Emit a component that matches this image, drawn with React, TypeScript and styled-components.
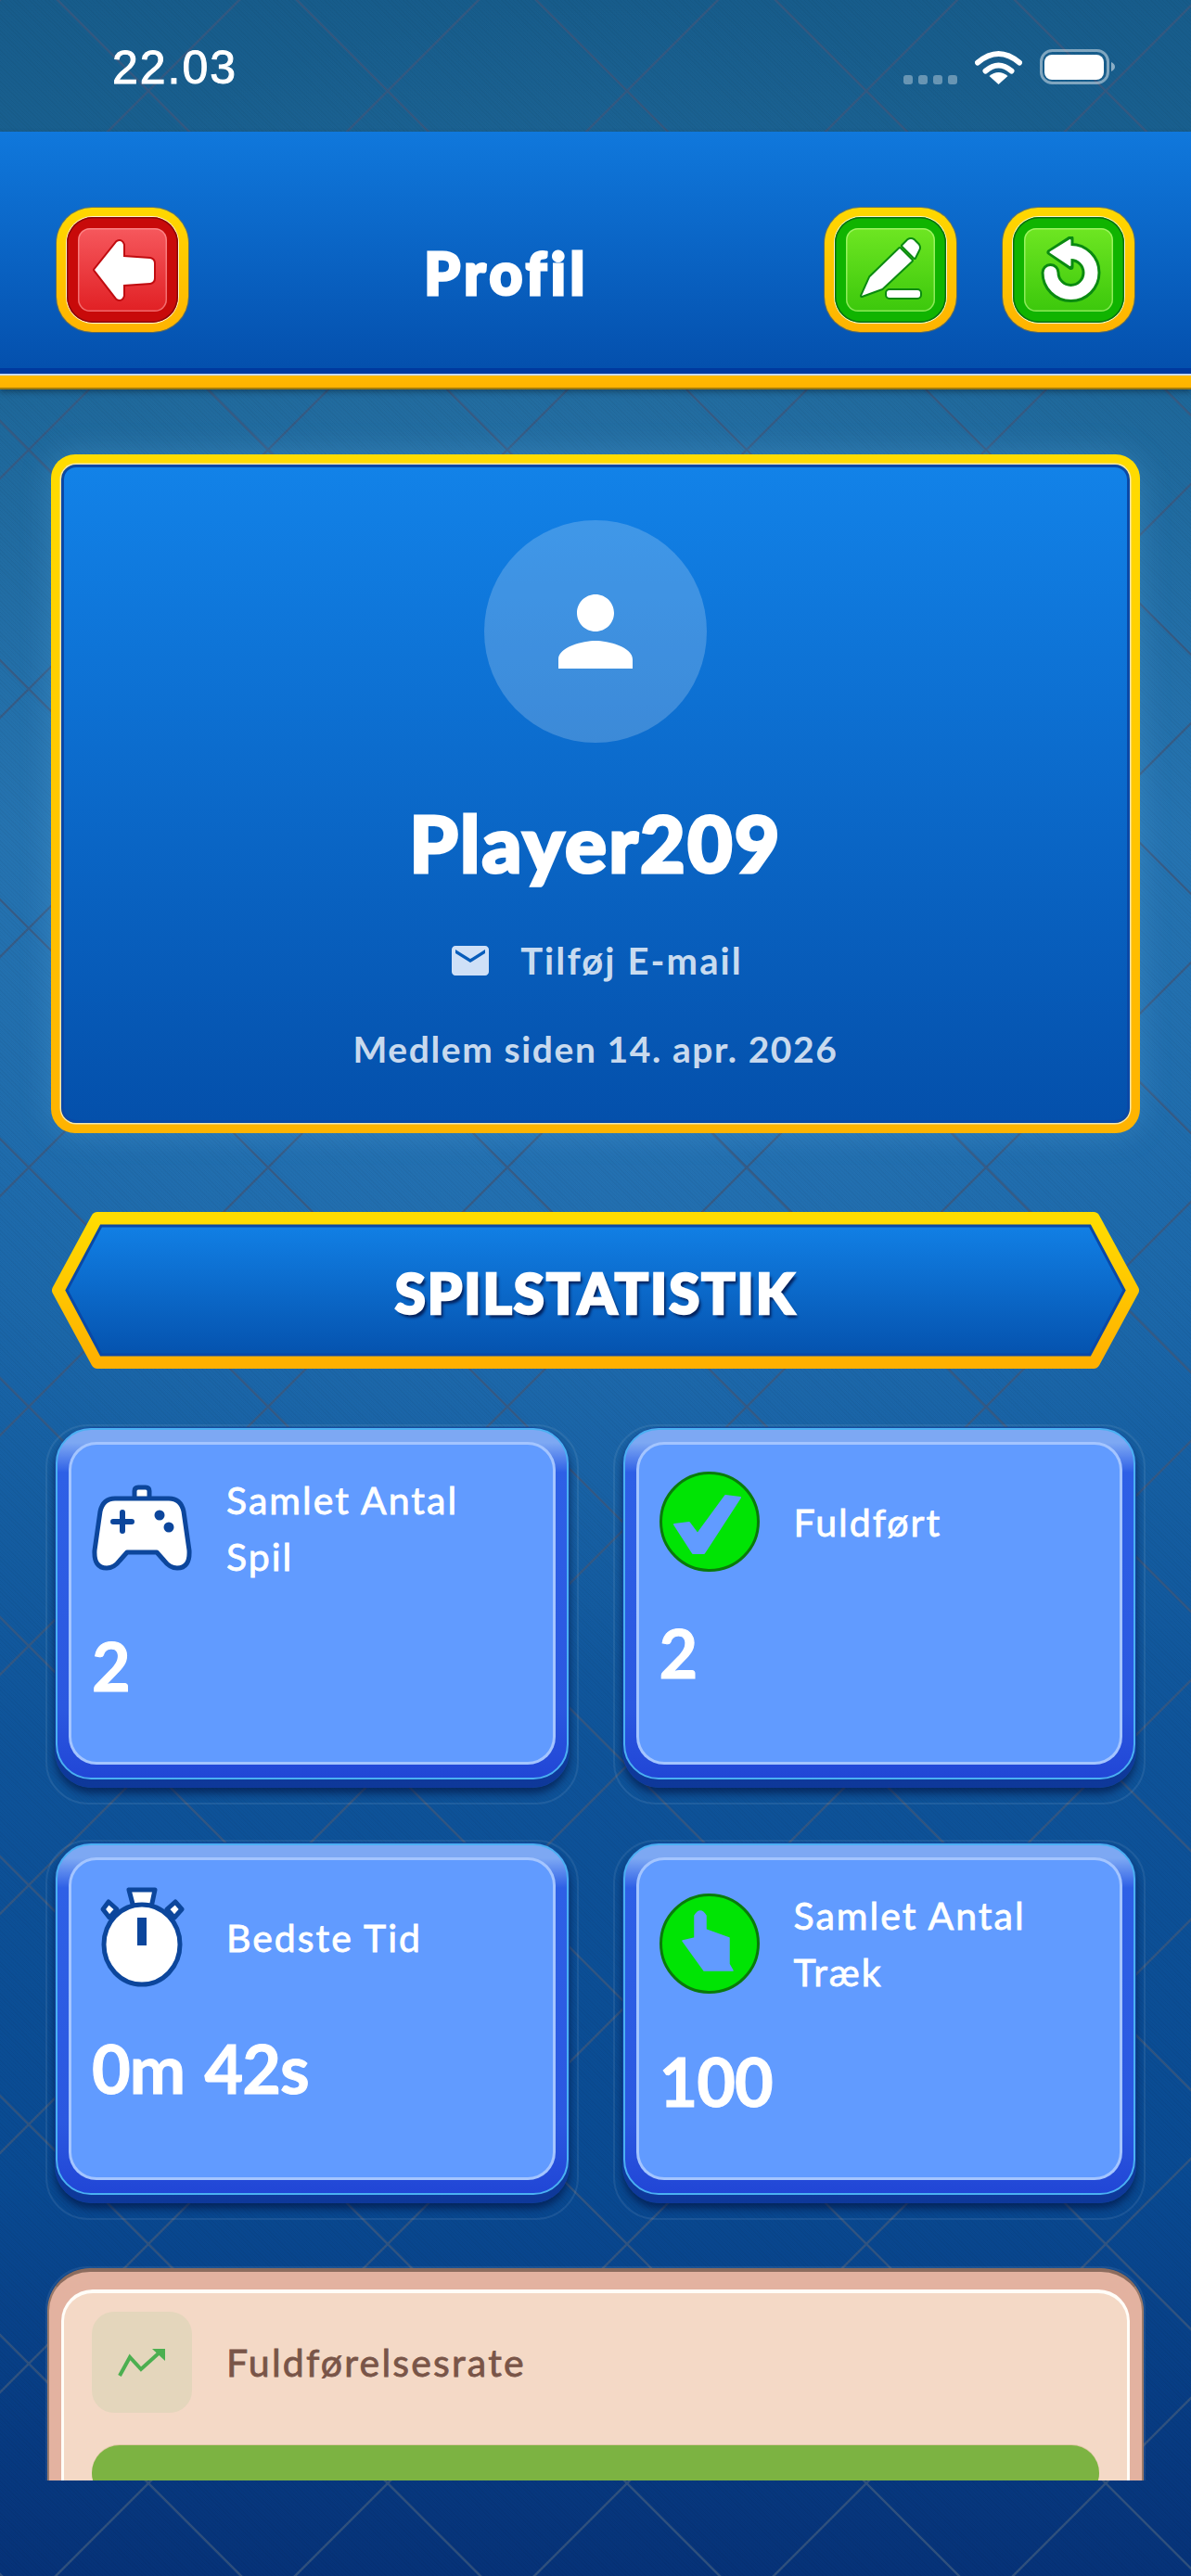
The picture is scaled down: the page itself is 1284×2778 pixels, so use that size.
import React from "react";
import styled, { createGlobalStyle } from "styled-components";

const tile = encodeURIComponent(
  `<svg xmlns="http://www.w3.org/2000/svg" width="258" height="258"><path d="M0 0L258 258M258 0L0 258" stroke="rgb(58,88,126)" stroke-opacity="0.8" stroke-width="2.4" fill="none"/></svg>`
);

const Global = createGlobalStyle`
  html, body { margin: 0; padding: 0; background: #0a4a90; }
  body { overflow: hidden; }
  * { box-sizing: border-box; }
`;

const Page = styled.div`
  width: 1284px;
  height: 2778px;
  display: flex;
  flex-direction: column;
  overflow: hidden;
  padding-bottom: 103px;
  font-family: Lato, "Noto Sans", sans-serif;
  color: #fff;
  background-color: #0a4a90;
  background-image:
    repeating-linear-gradient(45deg, rgba(0, 0, 0, 0.035) 0 1px, transparent 1px 3px),
    url("data:image/svg+xml,${tile}"),
    radial-gradient(ellipse 900px 900px at 50% 900px, rgba(70, 150, 215, 0.28), transparent 100%),
    linear-gradient(180deg, #175c8b 0, #1c6596 400px, #2270ad 900px, #1a66a8 1400px, #0e5399 1900px, #094a92 2350px, #063278 2778px);
  background-position: 0 0, 160px 98px, 0 0, 0 0;
  background-size: auto, 258px 258px, auto, auto;
`;

const StatusBar = styled.div`
  height: 142px;
  flex: none;
  display: flex;
  justify-content: space-between;
  align-items: flex-start;
  padding: 0 81px 0 121px;
`;

const Clock = styled.div`
  font-family: "Liberation Sans", sans-serif;
  font-size: 50px;
  line-height: 50px;
  margin-top: 48px;
  letter-spacing: 2px;
  -webkit-text-stroke: 1px #fff;
`;

const StatusIcons = styled.div`
  display: flex;
  align-items: flex-end;
  margin-top: 53px;
`;

const SignalDots = styled.div`
  display: flex;
  gap: 6px;
  margin-right: 19px;
`;

const SignalDot = styled.span`
  width: 10px;
  height: 10px;
  border-radius: 3px;
  background: rgba(255, 255, 255, 0.35);
`;

const Header = styled.header`
  height: 278px;
  flex: none;
  padding: 82px 61px 0;
  display: flex;
  justify-content: space-between;
  align-items: flex-start;
  background:
    linear-gradient(180deg, #1078dc 0, #0450ad 255px, #00399e 255px, #00399e 261px, #c7d9ef 261px, #c7d9ef 263px, #ffb900 263px, #ffb300 276px, #a07c10 276px);
  box-shadow: 0 3px 6px rgba(0, 0, 0, 0.3);
`;

const Title = styled.h1`
  margin: 0;
  padding-top: 30px;
  font-size: 62px;
  line-height: 80px;
  font-weight: 900;
  letter-spacing: 4.5px;
  -webkit-text-stroke: 3px #fff;
`;

const ButtonGroup = styled.div`
  display: flex;
  gap: 50px;
`;

const GameButton = styled.div`
  width: 142px;
  height: 134px;
  padding: 10px 11px;
  border-radius: 38px;
  background: linear-gradient(180deg, #ffd800, #ffb300);
  box-shadow: 0 0 0 1px rgba(170, 120, 20, 0.55);
`;

const ButtonFace = styled.div<{ $tone: "red" | "green" }>`
  height: 100%;
  padding: 12px;
  border-radius: 28px;
  background: ${(p) => (p.$tone === "red" ? "#c80a0a" : "#10b400")};
  box-shadow:
    0 0 0 1px #fff6d0,
    inset 0 0 0 1.5px ${(p) => (p.$tone === "red" ? "#8a0808" : "#0a7010")};
`;

const ButtonGloss = styled.div<{ $tone: "red" | "green" }>`
  height: 100%;
  border-radius: 13px;
  display: flex;
  align-items: center;
  justify-content: center;
  background: ${(p) =>
    p.$tone === "red"
      ? "linear-gradient(180deg, #f6585d, #e12024)"
      : "linear-gradient(180deg, #6ee622, #3cc80c)"};
  box-shadow: inset 0 0 0 1.5px ${(p) => (p.$tone === "red" ? "rgba(255,170,170,.55)" : "rgba(190,255,140,.6)")};
`;

const Scroller = styled.main`
  flex: 1;
  min-height: 0;
  overflow: hidden;
  padding: 70px 49px 0;
`;

const ProfileFrame = styled.section`
  margin: 0 6px;
  padding: 11px;
  border-radius: 26px;
  background: linear-gradient(180deg, #ffdc00, #ffb300);
  box-shadow: 0 0 34px rgba(120, 200, 255, 0.22);
`;

const ProfileCard = styled.div`
  height: 710px;
  padding-top: 57px;
  border-radius: 16px;
  display: flex;
  flex-direction: column;
  align-items: center;
  background: linear-gradient(180deg, #1282e8, #0450ab);
  border: 3px solid #0a48a6;
  box-shadow: 0 0 0 1.5px #f3e6b0;
`;

const Avatar = styled.div`
  width: 240px;
  height: 240px;
  flex: none;
  border-radius: 50%;
  background: rgba(255, 255, 255, 0.2);
  display: flex;
  align-items: center;
  justify-content: center;
`;

const PlayerName = styled.h2`
  margin: 58px 0 0;
  font-size: 84px;
  line-height: 100px;
  font-weight: 900;
  letter-spacing: 2.2px;
  -webkit-text-stroke: 3px #fff;
`;

const EmailRow = styled.div`
  margin-top: 52px;
  display: flex;
  align-items: center;
  gap: 30px;
  font-size: 40px;
  line-height: 50px;
  font-weight: 700;
  letter-spacing: 2.1px;
  color: rgba(255, 255, 255, 0.8);
`;

const MemberSince = styled.p`
  margin: 45px 0 0;
  font-size: 39px;
  line-height: 50px;
  font-weight: 700;
  letter-spacing: 1.6px;
  color: rgba(255, 255, 255, 0.8);
`;

const Banner = styled.div`
  position: relative;
  margin: 85px 6px 0;
  height: 169px;
  padding-top: 5px;
  display: flex;
  align-items: center;
  justify-content: center;
`;

const BannerShape = styled.svg`
  position: absolute;
  inset: 0;
  width: 100%;
  height: 100%;
`;

const BannerTitle = styled.h3`
  position: relative;
  margin: 0;
  font-size: 60px;
  line-height: 70px;
  font-weight: 900;
  letter-spacing: 2px;
  -webkit-text-stroke: 2.6px #fff;
  text-shadow: 3px 4px 3px rgba(3, 25, 80, 0.9);
`;

const StatGrid = styled.div`
  margin-top: 60px;
  display: grid;
  grid-template-columns: 1fr 1fr;
  gap: 38px 37px;
`;

const Halo = styled.div`
  border-radius: 46px;
  border: 2px solid rgba(255, 255, 255, 0.08);
  padding: 1px 8px 16px;
`;

const StatCard = styled.article`
  height: 389px;
  padding: 1px 1px 9px;
  border-radius: 40px;
  background: linear-gradient(180deg, #17499f, #0e389a);
  box-shadow: 0 6px 9px rgba(0, 15, 60, 0.6);
`;

const StatRing = styled.div`
  height: 100%;
  padding: 13px 12px 14px;
  border: 2.5px solid #4ab0f2;
  border-radius: 38px;
  background: linear-gradient(180deg, #7da8f3 0, #7da8f3 14px, #2e60e6 46px, #2b58e0 80%, #2146d6 100%);
`;

const StatFace = styled.div`
  height: 100%;
  padding: 29px 22px 0;
  border: 3px solid rgba(205, 222, 255, 0.62);
  border-radius: 30px;
  background: #619bff;
`;

const StatHead = styled.div`
  display: flex;
  align-items: center;
  gap: 37px;
`;

const IconSlot = styled.div`
  width: 108px;
  height: 108px;
  flex: none;
  display: flex;
  align-items: center;
  justify-content: center;
`;

const StatLabel = styled.div`
  font-size: 41px;
  line-height: 61px;
  font-weight: 400;
  letter-spacing: 2px;
  -webkit-text-stroke: 0.8px #fff;
`;

const StatValue = styled.div`
  margin-top: 44px;
  font-size: 72px;
  line-height: 86px;
  font-weight: 700;
  letter-spacing: -1px;
  word-spacing: 5px;
  -webkit-text-stroke: 1px #fff;
`;

const RateHalo = styled(Halo)`
  margin-top: 50px;
  padding: 0;
  height: 400px;
`;

const RateCard = styled.article`
  height: 100%;
  padding: 19px 13px 0;
  border-radius: 46px 46px 0 0;
  background: #e3b2a0;
  border-top: 4px solid #8c6c5e;
  border-left: 2px solid #9a7a6a;
  border-right: 2px solid #9a7a6a;
`;

const RateFace = styled.div`
  height: 100%;
  padding: 20px 30px 0;
  border: solid #fffdf8;
  border-width: 4px 3px 0;
  border-radius: 34px 34px 0 0;
  background: #f4d9c6;
`;

const RateHead = styled.div`
  display: flex;
  align-items: center;
  gap: 37px;
`;

const RateIcon = styled.div`
  width: 108px;
  height: 109px;
  flex: none;
  border-radius: 24px;
  background: #e4d6bc;
  display: flex;
  align-items: center;
  justify-content: center;
`;

const RateLabel = styled.div`
  font-size: 41px;
  line-height: 50px;
  font-weight: 400;
  letter-spacing: 2.2px;
  color: #795548;
  -webkit-text-stroke: 0.8px #795548;
`;

const RateBar = styled.div`
  margin-top: 35px;
  height: 60px;
  border-radius: 30px;
  background: #7cb342;
  box-shadow: 0 -1px 0 #e0c8a6;
`;

const Wifi = () => (
  <svg width="51" height="37" viewBox="0 0 51 37" style={{ marginRight: 19 }}>
    <path d="M3 13.5Q25.5-5.5 48 13.5" fill="none" stroke="#fff" strokeWidth="6" strokeLinecap="round" />
    <path d="M11.5 22.5Q25.5 10.5 39.5 22.5" fill="none" stroke="#fff" strokeWidth="6" strokeLinecap="round" />
    <path d="M25.5 37L15.5 28Q25.5 20 35.5 28Z" fill="#fff" />
  </svg>
);

const Battery = () => (
  <svg width="82" height="38" viewBox="0 0 82 38">
    <rect x="1.5" y="1.5" width="72" height="35" rx="12" fill="none" stroke="#fff" strokeOpacity=".45" strokeWidth="3" />
    <rect x="5" y="6" width="64" height="27" rx="8" fill="#fff" />
    <path d="M77 14Q81 16 81 19Q81 22 77 24Z" fill="#fff" fillOpacity=".5" />
  </svg>
);

const BackIcon = () => (
  <svg width="72" height="72" viewBox="0 0 72 72">
    <path
      d="M6 36L30 6Q35 3 37 9V22L66 24Q70 25 70 29V45Q70 49 66 50L37 52V64Q35 70 30 67Z"
      fill="#fff"
      stroke="#c00c10"
      strokeWidth="4"
      strokeLinejoin="round"
      paintOrder="stroke"
    />
  </svg>
);

const EditIcon = () => (
  <svg width="72" height="72" viewBox="0 0 72 72">
    <g stroke="#0a8a10" strokeWidth="4" strokeLinejoin="round" paintOrder="stroke" fill="#fff">
      <path d="M5 64L14 44L46 13L59 26L27 56Z" />
      <path d="M49 10L55 4Q58 2 61 4L66 9Q68 12 66 15L62 23Z" />
      <rect x="32" y="58" width="36" height="8" rx="3" />
    </g>
  </svg>
);

const RedoIcon = () => (
  <svg width="72" height="72" viewBox="0 0 72 72">
    <g strokeLinecap="round" strokeLinejoin="round">
      <path d="M16.5 39A22 22 0 1 0 38.5 17" fill="none" stroke="#0a8a10" strokeWidth="20" />
      <path d="M15.5 17L38.5 2V33Z" fill="#0a8a10" stroke="#0a8a10" strokeWidth="6" />
      <path d="M16.5 39A22 22 0 1 0 38.5 17" fill="none" stroke="#fff" strokeWidth="14" />
      <path d="M16.5 17L37.5 4V31Z" fill="#fff" stroke="#fff" strokeWidth="2" />
    </g>
  </svg>
);

const PersonIcon = () => (
  <svg width="120" height="120" viewBox="0 0 24 24" fill="#fff">
    <path d="M12 12c2.21 0 4-1.79 4-4s-1.79-4-4-4-4 1.79-4 4 1.79 4 4 4zm0 2c-2.67 0-8 1.34-8 4v2h16v-2c0-2.66-5.33-4-8-4z" />
  </svg>
);

const MailIcon = () => (
  <svg width="48" height="48" viewBox="0 0 24 24" fill="#cfe0f7">
    <path d="M20 4H4c-1.1 0-2 .9-2 2v12c0 1.1.9 2 2 2h16c1.1 0 2-.9 2-2V6c0-1.1-.9-2-2-2zm0 4l-8 5-8-5V6l8 5 8-5v2z" />
  </svg>
);

const ControllerIcon = () => (
  <svg width="108" height="96" viewBox="0 0 108 96">
    <path d="M46 18V8Q46 4 50 4H58Q62 4 62 8V18Z" fill="#fff" stroke="#0c469c" strokeWidth="5" />
    <path
      d="M25 16H83Q96 16 99 30L105 72Q106 91 92 91Q84 91 78 83L70 74H38L30 83Q24 91 16 91Q2 91 3 72L9 30Q12 16 25 16Z"
      fill="#fff"
      stroke="#0c469c"
      strokeWidth="5"
      strokeLinejoin="round"
    />
    <path d="M33 31V51M23 41H43" stroke="#0c469c" strokeWidth="6" strokeLinecap="round" />
    <circle cx="73" cy="34" r="5.5" fill="#0c469c" />
    <circle cx="83" cy="47" r="5.5" fill="#0c469c" />
  </svg>
);

const CheckIcon = () => (
  <svg width="108" height="108" viewBox="0 0 108 108">
    <ellipse cx="54" cy="54" rx="52.5" ry="52.5" fill="#00e404" stroke="#0a7a0a" strokeWidth="3" />
    <path d="M16 57L32 55L41 67L71 26L87 28L48 88H36Z" fill="#619bff" stroke="#619bff" strokeWidth="2" strokeLinejoin="round" />
  </svg>
);

const HandIcon = () => (
  <svg width="108" height="108" viewBox="0 0 108 108">
    <ellipse cx="54" cy="54" rx="52.5" ry="52.5" fill="#00e404" stroke="#0a7a0a" strokeWidth="3" />
    <path d="M38 24Q44 14 50 24V39L75 48V76L79 83H48L25 51L38 48Z" fill="#619bff" stroke="#619bff" strokeWidth="1.5" strokeLinejoin="round" />
  </svg>
);

const StopwatchIcon = () => (
  <svg width="92" height="108" viewBox="0 0 92 108">
    <g stroke="#0c469c" strokeWidth="5" strokeLinejoin="round" fill="#fff">
      <path d="M32 3H60L56 22H37Z" />
      <path d="M10 16L19 24L11 33L4 24Z" />
      <path d="M82 16L89 24L81 33L73 24Z" />
      <ellipse cx="46" cy="62" rx="41" ry="43" />
    </g>
    <rect x="41" y="33" width="10" height="30" fill="#0c469c" />
  </svg>
);

const TrendIcon = () => (
  <svg width="52" height="34" viewBox="0 0 52 34">
    <path d="M2 31L13 11L25 24L46 5" fill="none" stroke="#4caf50" strokeWidth="4" />
    <path d="M37 2H51V15Z" fill="#4caf50" />
  </svg>
);

type Stat = { icon: React.ReactNode; label: React.ReactNode; value: string };

const stats: Stat[] = [
  { icon: <ControllerIcon />, label: <>Samlet Antal<br />Spil</>, value: "2" },
  { icon: <CheckIcon />, label: "Fuldført", value: "2" },
  { icon: <StopwatchIcon />, label: "Bedste Tid", value: "0m 42s" },
  { icon: <HandIcon />, label: <>Samlet Antal<br />Træk</>, value: "100" },
];

export default function App() {
  return (
    <Page>
      <Global />
      <StatusBar>
        <Clock>22.03</Clock>
        <StatusIcons>
          <SignalDots>
            <SignalDot />
            <SignalDot />
            <SignalDot />
            <SignalDot />
          </SignalDots>
          <Wifi />
          <Battery />
        </StatusIcons>
      </StatusBar>
      <Header>
        <GameButton>
          <ButtonFace $tone="red">
            <ButtonGloss $tone="red">
              <BackIcon />
            </ButtonGloss>
          </ButtonFace>
        </GameButton>
        <Title>Profil</Title>
        <ButtonGroup>
          <GameButton>
            <ButtonFace $tone="green">
              <ButtonGloss $tone="green">
                <EditIcon />
              </ButtonGloss>
            </ButtonFace>
          </GameButton>
          <GameButton>
            <ButtonFace $tone="green">
              <ButtonGloss $tone="green">
                <RedoIcon />
              </ButtonGloss>
            </ButtonFace>
          </GameButton>
        </ButtonGroup>
      </Header>
      <Scroller>
        <ProfileFrame>
          <ProfileCard>
            <Avatar>
              <PersonIcon />
            </Avatar>
            <PlayerName>Player209</PlayerName>
            <EmailRow>
              <MailIcon />
              Tilføj E-mail
            </EmailRow>
            <MemberSince>Medlem siden 14. apr. 2026</MemberSince>
          </ProfileCard>
        </ProfileFrame>
        <Banner>
          <BannerShape viewBox="0 0 1174 169" preserveAspectRatio="none">
            <defs>
              <linearGradient id="bannerEdge" x1="0" y1="0" x2="0" y2="1">
                <stop offset="0" stopColor="#ffdc00" />
                <stop offset="1" stopColor="#ffb000" />
              </linearGradient>
              <linearGradient id="bannerFill" x1="0" y1="0" x2="0" y2="1">
                <stop offset="0" stopColor="#1282e8" />
                <stop offset="1" stopColor="#0450ab" />
              </linearGradient>
            </defs>
            <path
              d="M50 7H1124L1166 84.5L1124 162H50L8 84.5Z"
              fill="url(#bannerFill)"
              stroke="url(#bannerEdge)"
              strokeWidth="14"
              strokeLinejoin="round"
            />
            <path d="M54 15H1120L1157 84.5L1120 154H54L17 84.5Z" fill="none" stroke="#0a48a6" strokeWidth="3" />
          </BannerShape>
          <BannerTitle>SPILSTATISTIK</BannerTitle>
        </Banner>
        <StatGrid>
          {stats.map((s, i) => (
            <Halo key={i}>
              <StatCard>
                <StatRing>
                  <StatFace>
                    <StatHead>
                      <IconSlot>{s.icon}</IconSlot>
                      <StatLabel>{s.label}</StatLabel>
                    </StatHead>
                    <StatValue>{s.value}</StatValue>
                  </StatFace>
                </StatRing>
              </StatCard>
            </Halo>
          ))}
        </StatGrid>
        <RateHalo>
          <RateCard>
            <RateFace>
              <RateHead>
                <RateIcon>
                  <TrendIcon />
                </RateIcon>
                <RateLabel>Fuldførelsesrate</RateLabel>
              </RateHead>
              <RateBar />
            </RateFace>
          </RateCard>
        </RateHalo>
      </Scroller>
    </Page>
  );
}
